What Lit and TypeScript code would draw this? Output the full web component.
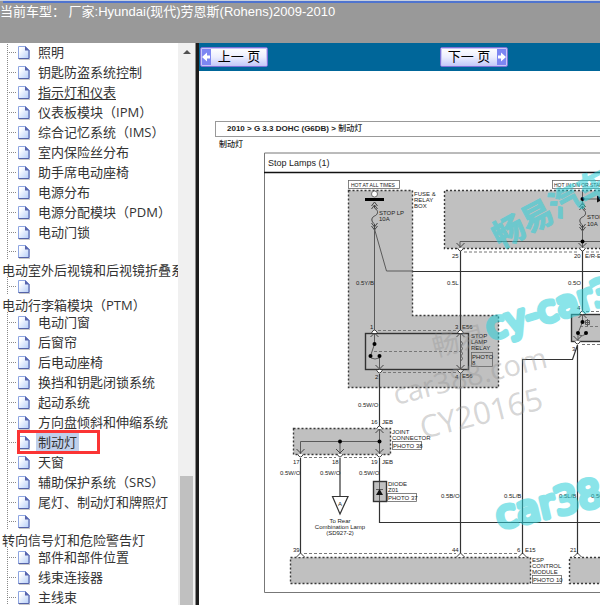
import { LitElement, html, svg, css } from "lit";
import { customElement, property } from "lit/decorators.js";

interface Item {
  text: string;
  wrapped?: boolean;
  hover?: boolean;
  current?: boolean;
}

const ITEMS: Item[] = [
  { text: "照明" },
  { text: "钥匙防盗系统控制" },
  { text: "指示灯和仪表", hover: true },
  { text: "仪表板模块（IPM）" },
  { text: "综合记忆系统（IMS）" },
  { text: "室内保险丝分布" },
  { text: "助手席电动座椅" },
  { text: "电源分布" },
  { text: "电源分配模块（PDM）" },
  { text: "电动门锁" },
  { text: "电动室外后视镜和后视镜折叠系统", wrapped: true },
  { text: "电动行李箱模块（PTM）", wrapped: true },
  { text: "电动门窗" },
  { text: "后窗帘" },
  { text: "后电动座椅" },
  { text: "换挡和钥匙闭锁系统" },
  { text: "起动系统" },
  { text: "方向盘倾斜和伸缩系统" },
  { text: "制动灯", current: true },
  { text: "天窗" },
  { text: "辅助保护系统（SRS）" },
  { text: "尾灯、制动灯和牌照灯" },
  { text: "转向信号灯和危险警告灯", wrapped: true },
  { text: "部件和部件位置" },
  { text: "线束连接器" },
  { text: "主线束" },
];

@customElement("tree-nav")
class TreeNav extends LitElement {
  static styles = css`
    :host {
      display: flex;
      flex: none;
      width: 199px;
      box-sizing: border-box;
      overflow: hidden;
      background: #fff;
      border-right: 3px solid #1c1c1c;
    }
    nav {
      flex: 1;
      min-width: 0;
      overflow: hidden;
    }
    ul {
      list-style: none;
      margin: -1px 0 0;
      padding: 0;
    }
    li {
      display: flex;
      position: relative;
      height: 20px;
    }
    .wrapped {
      flex-direction: column;
      height: 35px;
    }
    .branch {
      flex: none;
      display: flex;
      align-items: center;
      width: 36px;
      height: 20px;
      background: repeating-linear-gradient(#888 0 1px, #fff 1px 2px) 7px 0 / 1px 100% no-repeat;
    }
    .wrapped .branch {
      height: 18px;
    }
    .dots {
      width: 8px;
      height: 1px;
      margin-left: 9px;
      background: repeating-linear-gradient(90deg, #888 0 1px, #fff 1px 2px);
    }
    .page {
      display: block;
      margin: 2px 0 0 1px;
    }
    a {
      padding: 0 2px;
      color: #333;
      font-size: 13px;
      line-height: 20px;
      text-decoration: none;
      white-space: nowrap;
    }
    .hover {
      text-decoration: underline;
      text-underline-offset: 2px;
    }
    .current {
      background: #c0d0ec;
    }
    .mark {
      position: absolute;
      left: 17px;
      top: -2px;
      width: 83px;
      height: 24px;
      box-sizing: border-box;
      border: 3px solid #fb3434;
    }
    .scrollbar {
      flex: none;
      display: flex;
      flex-direction: column;
      align-items: center;
      width: 17px;
      background: #f0f0f0;
      border-right: 1px solid #8c8c8c;
    }
    .arrow {
      margin-top: 7px;
      border: 4px solid transparent;
      border-top: 0;
      border-bottom-color: #505050;
    }
    .thumb {
      width: 13px;
      flex: 1;
      margin-top: 422px;
      background: #c0c0c0;
    }
  `;

  render() {
    return html`
      <nav aria-label="目录">
        <ul>
          ${ITEMS.map(
            (i) => html`<li class=${i.wrapped ? "wrapped" : "row"}>
              <span class="branch">
                <span class="dots"></span>
                <svg class="page" width="12" height="14" viewBox="0 0 12 14" aria-hidden="true">
                  <defs>
                    <linearGradient id="g" x1="0" y1="0" x2="1" y2="1">
                      <stop offset="0.2" stop-color="#fff" />
                      <stop offset="1" stop-color="#b4cdf8" />
                    </linearGradient>
                  </defs>
                  <path d="M1 13.5H12V5" fill="none" stroke="#c9c9c9" />
                  <path d="M.5 .5H7.5L11 4V12.5H.5Z" fill="url(#g)" stroke="#8ea6e2" />
                  <path d="M11 4V12.5H.5" fill="none" stroke="#5563a8" />
                  <path d="M7 0L11.5 4.5H7Z" fill="#5865ad" />
                </svg>
              </span>
              <a href="#" class=${i.current ? "current" : i.hover ? "hover" : "plain"}>${i.text}</a>
              ${i.current ? html`<span class="mark"></span>` : ""}
            </li>`
          )}
        </ul>
      </nav>
      <div class="scrollbar"><span class="arrow"></span><span class="thumb"></span></div>
    `;
  }
}

@customElement("page-button")
class PageButton extends LitElement {
  @property() label = "";
  @property({ type: Boolean }) forward = false;

  static styles = css`
    button {
      display: flex;
      width: 68px;
      height: 20px;
      padding: 0;
      border: 1px solid #7d72d8;
      border-radius: 2px;
      outline: 1px solid #c9c6f6;
      outline-offset: -2px;
      background: linear-gradient(#fff, #eceefe 50%, #c2c8fa);
      color: #000;
      font: 400 13px/18px "Liberation Sans", "Noto Sans CJK SC", sans-serif;
      overflow: hidden;
    }
    .forward {
      flex-direction: row-reverse;
    }
    svg {
      display: block;
      flex: none;
    }
    span {
      flex: 1;
      white-space: pre;
    }
  `;

  render() {
    return html`<button type="button" class=${this.forward ? "forward" : "back"}>
      <svg width="10" height="18" viewBox="0 0 10 18" aria-hidden="true">
        <rect width="10" height="18" fill="#7d86f2" />
        <path
          d=${this.forward ? "M1 7.5H4V4.5L9 9L4 13.5V10.5H1Z" : "M9 7.5H6V4.5L1 9L6 13.5V10.5H9Z"}
          fill="#fff"
        />
      </svg>
      <span>${this.label}</span>
    </button>`;
  }
}

const label = (x: number, y: number, t: string) => svg`<text class="label" x=${x} y=${y}>${t}</text>`;
const wire = (d: string) => svg`<path class="wire" d=${d} />`;
const thin = (d: string) => svg`<path class="thin" d=${d} />`;
const dash = (d: string) => svg`<path class="dash" d=${d} />`;
const block = (d: string) => svg`<path class="block" d=${d} />`;
const dot = (x: number, y: number) => svg`<circle class="dot" cx=${x} cy=${y} r="2" />`;
const frame = (x: number, y: number, w: number, h: number) =>
  svg`<rect class="frame" x=${x} y=${y} width=${w} height=${h} />`;
/* Plug terminal: pointed towards the lower side */
const plug = (x: number, y: number) =>
  svg`<path class="term" d="M${x - 4} ${y - 5}L${x} ${y - 1}L${x + 4} ${y - 5}" /><path class="term white" d="M${x - 3} ${y}Q${x} ${y + 6} ${x + 3} ${y}" />`;
/* Socket terminal: pointed towards the upper side */
const socket = (x: number, y: number) =>
  svg`<path class="term" d="M${x - 4} ${y + 4}L${x} ${y}L${x + 4} ${y + 4}" /><path class="term white" d="M${x - 3} ${y}Q${x} ${y - 6} ${x + 3} ${y}" />`;
/* Module pin: an open peak on the edge of a module */
const peak = (x: number, y: number) =>
  svg`<path class="term white" d="M${x - 4} ${y}L${x} ${y - 4}L${x + 4} ${y}" />`;
const fuse = (x: number, y: number) =>
  svg`<path class="term" d="M${x - 3} ${y + 4}L${x} ${y}L${x + 3} ${y + 4}M${x - 3} ${y + 7}L${x} ${y + 3}L${x + 3} ${y + 7}M${x} ${y + 3}V${y + 6}C${x + 5} ${y + 9} ${x + 3} ${y + 13} ${x} ${y + 14}C${x - 4} ${y + 16} ${x - 3} ${y + 20} ${x} ${y + 22}V${y + 28}M${x - 3} ${y + 21}L${x} ${y + 25}L${x + 3} ${y + 21}M${x - 3} ${y + 24}L${x} ${y + 28}L${x + 3} ${y + 24}" />`;

@customElement("wiring-diagram")
class WiringDiagram extends LitElement {
  static styles = css`
    :host {
      display: block;
      overflow: hidden;
    }
    svg {
      display: block;
      font-family: "Liberation Sans", sans-serif;
    }
    .label {
      font-size: 6px;
      fill: #222;
    }
    .small {
      font-size: 5px;
      fill: #222;
    }
    .title {
      font-size: 9px;
      fill: #222;
    }
    .mid {
      text-anchor: middle;
    }
    .block {
      fill: #c0c0c0;
      stroke: #3a3a3a;
      stroke-width: 1.4;
      stroke-dasharray: 2 2;
    }
    .wire {
      fill: none;
      stroke: #333;
      stroke-width: 1.2;
    }
    .thin {
      fill: none;
      stroke: #5a5a5a;
      stroke-width: 1;
    }
    .dash {
      fill: none;
      stroke: #777;
      stroke-dasharray: 3 2;
    }
    .term {
      fill: none;
      stroke: #444;
    }
    .white {
      fill: #fff;
    }
    .dot {
      fill: #000;
    }
    .frame {
      fill: none;
      stroke: #666;
      stroke-width: 0.8;
    }
    .box {
      fill: #c0c0c0;
      stroke: #333;
      stroke-width: 1.4;
    }
    .grey {
      fill: #969696;
      fill-opacity: 0.4;
      font-family: "Open Sans", "Noto Sans CJK SC", sans-serif;
    }
    .cyan {
      fill: #2bcfd8;
      stroke: #2bcfd8;
      stroke-width: 5;
      stroke-linejoin: round;
      opacity: 0.55;
      font-family: "DejaVu Sans", sans-serif;
    }
    .brand {
      font-family: "Noto Sans CJK SC", sans-serif;
      font-weight: 700;
      stroke-width: 1;
    }
  `;

  render() {
    return html`<svg width="640" height="453" viewBox="199 152 640 453" role="img" aria-label="Stop Lamps (1)">
      <path d="M264.500 592.500V153H839M264.500 592.500H839" fill="none" stroke="#777" />
      <path d="M264 172.500H839" stroke="#111" stroke-width="1.500" />
      <text class="title" x="268" y="166">Stop Lamps (1)</text>

      ${block("M348.500 190.500H412.500V315.500H498.500V387.500H348.500Z")}
      ${block("M700 190.500H444.500V248.500H700")}
      ${block("M293.500 428.500H390.500V454.500H293.500Z")}
      ${block("M290.500 557.500H530.500V583.500H290.500Z")}
      ${block("M700 557.500H569.500V583.500H700")}
      <rect class="box" x="365.500" y="333.500" width="103" height="36" />
      <rect class="box" x="571.500" y="314.500" width="120" height="27" />
      <rect class="box" x="373.500" y="481.500" width="13" height="20" />

      ${frame(348.5, 180.5, 51, 8)} ${frame(552.5, 180.5, 66, 8)}
      <text class="small" x="351" y="187">HOT AT ALL TIMES</text>
      <text class="small" x="554" y="187">HOT IN ON OR START</text>
      ${label(414, 196, "FUSE &")} ${label(414, 202, "RELAY")} ${label(414, 208, "BOX")}
      ${label(379, 215, "STOP LP")} ${label(379, 221, "10A")}
      ${label(587, 219, "STOP")} ${label(587, 226, "10A")}

      <circle cx="374.500" cy="194" r="3" fill="#fff" stroke="#555" stroke-width="0.800" />
      <rect x="365" y="198" width="19" height="3" fill="#000" />
      ${fuse(374.5, 202)} ${fuse(582.5, 203)}
      ${thin("M374.500 230V332M374.500 229L386.500 271H413")} ${wire("M413 271.500H700")}
      ${thin("M460 248V241.500H700M582.500 191V205M582.500 230V248M582.500 199H598")}
      ${dot(582.5, 199)} ${dot(582.5, 241.5)}
      <path d="M597 195.500L604 199L597 202.500Z" fill="#111" />

      ${wire("M460.500 251V333")} ${thin("M460.500 333V388")} ${wire("M460.500 388V555")}
      ${wire("M582.500 251V313")} ${dash("M464 252H579M586 252H700")}
      ${plug(460.5, 248)} ${plug(582.5, 248)}
      ${label(452, 258, "25")} ${label(574, 258, "20")} ${label(585, 258, "E/R-E11")}
      ${label(356, 285, "0.5Y/B")} ${label(447, 285, "0.5L")} ${label(568, 285, "0.5O")}

      ${dash("M378 330.500H457M378 372.500H457M374 351.500H460")}
      ${socket(374.5, 333)} ${socket(460.5, 333)} ${plug(379.5, 370)} ${plug(460.5, 370)}
      ${thin("M374.500 334V344L370.500 356M379.500 356V370M371 358Q375 360 379 358")}
      ${dot(374.5, 344)} ${dot(370.5, 356)} ${dot(379.5, 356)}
      <path class="thin" d="M460.500 341q4 2.500 0 5q4 2.500 0 5q4 2.500 0 5q4 2.500 0 5" />
      ${label(370, 329, "1")} ${label(455, 329, "3")} ${label(462, 329, "E56")}
      ${label(375, 379, "2")} ${label(455, 379, "4")} ${label(462, 378, "E56")}
      ${label(471, 338, "STOP")} ${label(471, 344, "LAMP")} ${label(471, 350, "RELAY")}
      ${frame(471.5, 352.5, 21, 14)} ${label(472, 359, "PHOTO")} ${label(472, 365, "8")}

      ${wire("M379.500 374V429")} ${thin("M379.500 429V454M379.500 441.500H300.500V454M340 441.500V454")}
      ${dot(340, 441.5)} ${dot(379.5, 441.5)} ${socket(379.5, 429)}
      ${dash("M304 457.500H336M344 457.500H376")}
      ${wire("M300.500 458V555M340 458V496M379.500 458V481M379.500 502V522.500H700")}
      ${plug(300.5, 454)} ${plug(340, 454)} ${plug(379.5, 454)}
      ${label(358, 407, "0.5W/O")} ${label(371, 424, "16")} ${label(382, 424, "JEB")}
      ${label(392, 434, "JOINT")} ${label(392, 440, "CONNECTOR")}
      ${frame(392.5, 441.5, 29, 8)} ${label(393, 448, "PHOTO 38")}
      ${label(293, 464, "17")} ${label(332, 464, "18")} ${label(371, 464, "19")} ${label(382, 464, "JEB")}
      ${label(280, 475, "0.5W/O")} ${label(320, 475, "0.5W/O")} ${label(359, 475, "0.5W/O")}
      <path class="wire white" d="M332.500 496.500H348L340 514Z" />
      <text class="label mid" x="340" y="506">A</text>
      <text class="label mid" x="340" y="523">To Rear</text>
      <text class="label mid" x="340" y="529">Combination Lamp</text>
      <text class="label mid" x="340" y="535">(SD927-2)</text>
      ${thin("M379.500 482V501M376 489.500H383")}
      <path d="M379.500 489L383 495H376Z" fill="#111" />
      ${label(388, 486, "DIODE")} ${label(388, 492, "Z01")}
      ${frame(387.5, 493.5, 29, 8)} ${label(388, 500, "PHOTO 37")}

      ${dash("M304 553.500H456M464 553.500H519")}
      ${peak(300.5, 557)} ${peak(460.5, 557)} ${peak(522.5, 557)} ${peak(577.5, 557)}
      ${wire("M577.500 345L572.500 359.500H522.500V554M577.500 345V554")}
      ${label(293, 552, "39")} ${label(452, 552, "44")} ${label(517, 552, "6")} ${label(525, 552, "E15")}
      ${label(570, 552, "21")}
      ${label(441, 498, "0.5B/O")} ${label(504, 498, "0.5L/B")} ${label(559, 498, "0.5L/B")} ${label(591, 498, "0.5G")}
      ${label(532, 562, "ESP")} ${label(532, 568, "CONTROL")} ${label(532, 574, "MODULE")}
      ${frame(532.5, 575.5, 29, 8)} ${label(533, 582, "PHOTO 10")}

      ${dash("M586 311.500H700M580 326.500H700M582 344.500H700")}
      ${socket(582.5, 314)} ${plug(577.5, 341)}
      ${thin("M582.500 314V322L578 333V341M579 335Q582 337 586 334")}
      ${dot(582.5, 322)} ${dot(578, 333)} ${dot(586, 333)}
      <path class="thin" d="M585.500 320.500h4v4h-4zM585.500 322.500h4M587.500 319v7" />
      ${label(577, 310, "4")} ${label(572, 351, "3")}

      <text class="grey" font-size="27" transform="translate(435 357) rotate(-14)">畅易</text>
      <text class="grey" font-size="29" transform="translate(396 405) rotate(-14)">car388.com</text>
      <text class="grey" font-size="31" transform="translate(423 439) rotate(-14)">CY20165</text>
      <text class="cyan brand" font-size="32" transform="translate(500 249) rotate(-28)">畅易汽车</text>
      <text class="cyan" font-size="36" transform="translate(490 340) rotate(-17)">cy-car388.com</text>
      <text class="cyan" font-size="38" transform="translate(499 529) rotate(-13)">car388.com</text>
    </svg>`;
  }
}

@customElement("app-root")
class AppRoot extends LitElement {
  static styles = css`
    :host {
      display: flex;
      flex-direction: column;
      height: 100vh;
      overflow: hidden;
      background: #fff;
      font-family: "Liberation Sans", "Noto Sans CJK SC", sans-serif;
    }
    header {
      flex: none;
      height: 43px;
      box-sizing: border-box;
      background: #999;
      border-top: 1px solid #c8d0e0;
      color: #fff;
      line-height: 17px;
      white-space: nowrap;
    }
    .rule {
      height: 2px;
      margin-left: 3px;
      background: #4f74cf;
    }
    .model {
      margin: 0;
      font-weight: 400;
      font-size: 13px;
    }
    .body {
      flex: 1;
      min-height: 0;
      display: flex;
    }
    tree-nav {
      font-family: "Open Sans", "Noto Sans CJK SC", sans-serif;
    }
    main {
      flex: 1;
      min-width: 0;
      overflow: hidden;
    }
    .toolbar {
      display: flex;
      gap: 172px;
      height: 28px;
      box-sizing: border-box;
      padding: 4px 0 0 1px;
      background: #069;
    }
    .crumbs {
      margin: 50px 0 0 16px;
      padding-left: 11px;
      border: 1px solid #999;
      border-right: 0;
      font-size: 8px;
      font-weight: 700;
      line-height: 14px;
      color: #222;
      white-space: nowrap;
    }
    .crumbs span {
      font-weight: 500;
    }
    .heading {
      margin: 0 0 0 20px;
      font-size: 8px;
      font-weight: 500;
      line-height: 15px;
      color: #222;
    }
  `;

  render() {
    return html`
      <header>
        <div class="rule"></div>
        <h1 class="model">当前车型： 厂家:Hyundai(现代)劳恩斯(Rohens)2009-2010</h1>
      </header>
      <div class="body">
        <tree-nav></tree-nav>
        <main>
          <div class="toolbar">
            <page-button label="上一 页"></page-button>
            <page-button label="下一 页" forward></page-button>
          </div>
          <div class="crumbs">2010 &gt; G 3.3 DOHC (G6DB) &gt; <span>制动灯</span></div>
          <h2 class="heading">制动灯</h2>
          <wiring-diagram></wiring-diagram>
        </main>
      </div>
    `;
  }
}
